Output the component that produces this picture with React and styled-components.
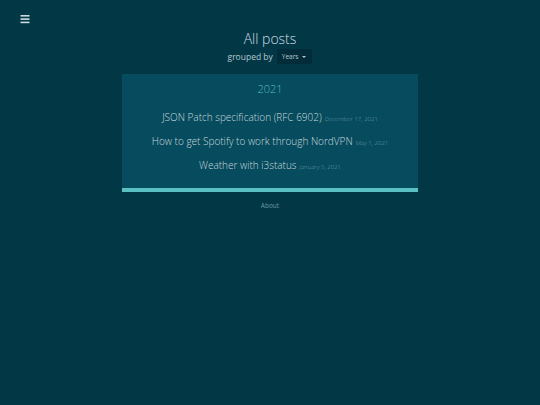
import React from 'react'
import styled, { createGlobalStyle } from 'styled-components'

const GlobalStyle = createGlobalStyle`
    html, body {
        margin: 0;
        padding: 0;
        background: #023746;
        font-family: "Open Sans", "Liberation Sans", sans-serif;
    }
`

const Page = styled.div`
    min-height: 405px;
    background: #023746;
    color: #c6d6da;
    font-weight: 300;
`

const MenuButton = styled.button`
    display: block;
    border: 0;
    background: none;
    padding: 0;
    margin: 12px 0 0 20px;
    width: 10px;
    height: 10px;
    cursor: pointer;
`

const Main = styled.main`
    width: 296px;
    margin: 0 auto;
    display: flex;
    flex-direction: column;
    align-items: stretch;
`

const Title = styled.h1`
    margin: 7px 0 0;
    text-align: center;
    font-size: 14px;
    font-weight: 300;
    line-height: 20px;
    color: #d0dde0;
`

const GroupRow = styled.div`
    display: flex;
    justify-content: center;
    align-items: center;
    gap: 4px;
    font-size: 8.5px;
    font-weight: 400;
    color: #b7c9ce;
`

const Select = styled.button`
    display: flex;
    align-items: center;
    gap: 4px;
    height: 15px;
    padding: 0 6px 0 5px;
    border: 0;
    border-radius: 2px;
    background: #022c39;
    color: #b7c9ce;
    font-family: inherit;
    font-size: 6.5px;
    &::after {
        content: '';
        border-left: 2px solid transparent;
        border-right: 2px solid transparent;
        border-top: 2px solid #b7c9ce;
    }
`

const Card = styled.section`
    margin-top: 10px;
    background: #064b5e;
    border-bottom: 4px solid #5bc0c2;
    padding: 7px 0 15px;
    display: flex;
    flex-direction: column;
    align-items: center;
`

const Year = styled.h2`
    margin: 0 0 12px;
    font-size: 11px;
    font-weight: 300;
    line-height: 16px;
    color: #5cb9c1;
`

const PostList = styled.ul`
    list-style: none;
    margin: 0;
    padding: 0;
    display: flex;
    flex-direction: column;
    align-items: center;
    gap: 8px;
`

const Post = styled.li`
    display: flex;
    align-items: baseline;
    height: 16px;
    line-height: 16px;
    font-size: 10px;
    color: #c9d8dc;
`

const PostDate = styled.span`
    margin-left: 3px;
    font-size: 6px;
    color: #6f9ba7;
`

const Footer = styled.footer`
    margin-top: 9px;
    text-align: center;
    font-size: 6.5px;
    font-weight: 400;
    color: #6d9aa6;
`

const posts = [
    { id: 'rfc6902', title: 'JSON Patch specification (RFC 6902)', date: 'December 17, 2021' },
    { id: 'spotify', title: 'How to get Spotify to work through NordVPN', date: 'May 1, 2021' },
    { id: 'i3status', title: 'Weather with i3status', date: 'January 5, 2021' }
]

const App = () => (
    <Page>
        <GlobalStyle />
        <MenuButton aria-label="Menu">
            <svg width="10" height="10" viewBox="0 0 10 10">
                <rect x="0.5" y="1" width="9" height="1.6" fill="#c9dbe0" />
                <rect x="0.5" y="4.3" width="9" height="1.6" fill="#c9dbe0" />
                <rect x="0.5" y="7.6" width="9" height="1.6" fill="#c9dbe0" />
            </svg>
        </MenuButton>
        <Main>
            <Title>All posts</Title>
            <GroupRow>
                grouped by
                <Select>Years</Select>
            </GroupRow>
            <Card>
                <Year>2021</Year>
                <PostList>
                    {posts.map(({ id, title, date }) => (
                        <Post key={id}>
                            {title}
                            <PostDate>{date}</PostDate>
                        </Post>
                    ))}
                </PostList>
            </Card>
            <Footer>About</Footer>
        </Main>
    </Page>
)

export default App
